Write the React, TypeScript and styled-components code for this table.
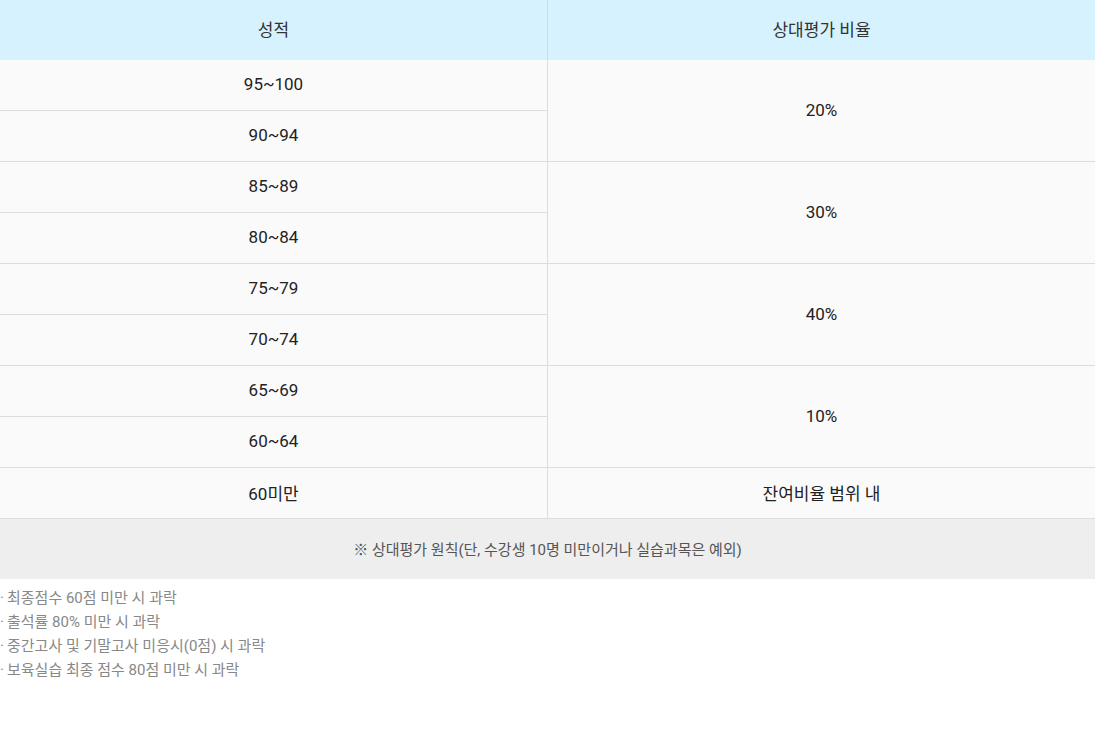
import styled, { createGlobalStyle } from "styled-components";

const GlobalStyle = createGlobalStyle`
	body {
		margin: 0;
		background: #fff;
		font-family: Roboto, "Noto Sans CJK KR", sans-serif;
	}
`;

const groups = [
	{ rate: "20%", scores: ["95~100", "90~94"] },
	{ rate: "30%", scores: ["85~89", "80~84"] },
	{ rate: "40%", scores: ["75~79", "70~74"] },
	{ rate: "10%", scores: ["65~69", "60~64"] },
];

const rules = [
	"최종점수 60점 미만 시 과락",
	"출석률 80% 미만 시 과락",
	"중간고사 및 기말고사 미응시(0점) 시 과락",
	"보육실습 최종 점수 80점 미만 시 과락",
];

export default function App() {
	return (
		<>
			<GlobalStyle />
			<Wrapper>
				<GradeTable>
					<thead>
						<tr>
							<HeadCell>성적</HeadCell>
							<HeadCell>상대평가 비율</HeadCell>
						</tr>
					</thead>
					<tbody>
						{groups.map((g) =>
							g.scores.map((s, i) => (
								<tr key={s}>
									<Cell>{s}</Cell>
									{i === 0 && <Cell rowSpan={g.scores.length}>{g.rate}</Cell>}
								</tr>
							))
						)}
						<tr>
							<Cell>60미만</Cell>
							<Cell>잔여비율 범위 내</Cell>
						</tr>
						<tr>
							<NoteCell colSpan={2}>※ 상대평가 원칙(단, 수강생 10명 미만이거나 실습과목은 예외)</NoteCell>
						</tr>
					</tbody>
				</GradeTable>
				<RuleList>
					{rules.map((r) => (
						<li key={r}>
							<Dot>·</Dot>
							{r}
						</li>
					))}
				</RuleList>
			</Wrapper>
		</>
	);
}

const Wrapper = styled.div`
	width: 1095px;
`;

const GradeTable = styled.table`
	width: 100%;
	border-collapse: collapse;
	table-layout: fixed;
`;

const HeadCell = styled.th`
	height: 57px;
	padding: 0 0 3px;
	background: #d6f2fe;
	color: #333;
	font-size: 17px;
	font-weight: 400;
	text-align: center;

	& + & {
		border-left: 1px solid #bfe0ee;
	}
`;

const Cell = styled.td`
	height: 48px;
	padding: 0 0 2px;
	background: #fafafa;
	color: #222;
	font-size: 17px;
	text-align: center;
	border-bottom: 1px solid #dddddd;
	border-left: 1px solid #dddddd;

	&:first-child {
		border-left: none;
	}
`;

const NoteCell = styled.td`
	height: 58px;
	padding: 0 0 2px;
	background: #eeeeee;
	color: #555;
	font-size: 15px;
	text-align: center;
`;

const RuleList = styled.ul`
	list-style: none;
	margin: 0;
	padding: 7px 0 0;

	li {
		display: flex;
		font-size: 15px;
		line-height: 24px;
		color: #888;
	}
`;

const Dot = styled.span`
	width: 7px;
	flex: none;
`;
